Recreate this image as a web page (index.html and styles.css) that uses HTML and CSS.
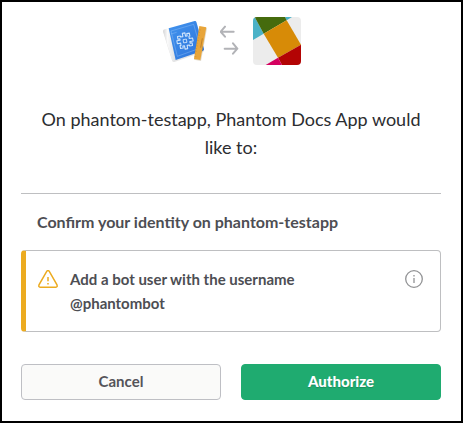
FILE: index.html
```html
<!DOCTYPE html>
<html lang="en">
<head>
<meta charset="utf-8">
<title>Authorize Phantom Docs App</title>
<link rel="stylesheet" href="styles.css">
</head>
<body>
<main class="dialog">
  <header class="apps">
    <svg class="app-icon" viewBox="18 27 144 144" aria-hidden="true">
      <defs>
        <linearGradient id="cover" x1="0" y1="0" x2="1" y2="1"><stop offset="0" stop-color="#4294ee"/><stop offset="1" stop-color="#2c72da"/></linearGradient>
        <linearGradient id="spine" x1="0" y1="0" x2="1" y2="0"><stop offset="0" stop-color="#d4d4d6"/><stop offset=".35" stop-color="#fafafa"/><stop offset="1" stop-color="#dcdee1"/></linearGradient>
      </defs>
      <path d="M24 68Q25 65 29 64L121 40Q125 39 126 43L147 124Q148 128 144 129L58 159Q54 160 52 157Z" fill="#777" opacity=".2" transform="translate(0 3)"/>
      <path d="M24 68Q25 65 29 64L42 61L63 156L57 158Q53 159 51 155Z" fill="url(#spine)"/>
      <path d="M41 61L119 39Q123 38 124 42L147 123Q148 127 144 128L62 156Z" fill="url(#cover)"/>
      <path d="M48 69L116 49L136 120L67 145Z M48 78L65 73" fill="none" stroke="#a9cff8" stroke-width="1.5" opacity=".7"/>
      <g transform="translate(90 99) rotate(-10)" fill="none" stroke="#cfe4fb" stroke-width="3.2" stroke-linejoin="round">
        <path d="M-4-14V-24H4V-14H9V-21H17V-12H14V-5H24V4H14V9H20V17H11V14H4V24H-4V14H-9V20H-17V11H-14V4H-24V-5H-14V-9H-20V-17H-11V-14Z"/>
        <rect x="-5" y="-5" width="10" height="10" stroke-width="2.5"/>
      </g>
      <path d="M134 56L155 59L137 157L116 153Z" fill="#8b6b2d" opacity=".25" transform="translate(1 2)"/>
      <path d="M133 54L154 58L136 156L117 153Z" fill="#e8a53a"/>
      <path d="M132 65l6 1M131 73l4 1M129 81l6 1M128 89l4 1M126 97l6 1M125 105l4 1M123 113l6 1M122 121l4 1M120 129l6 1M119 137l4 1M118 145l6 1" stroke="#c58429" stroke-width="1.2"/>
      <path d="M142 91L137 119" stroke="#b57a28" stroke-width="2.5"/>
    </svg>
    <svg class="arrows" viewBox="30 52 57 90" aria-hidden="true">
      <path d="M71 72H33M45 57L32 72L45 87M44 123H81M69 107L82 123L69 138"/>
    </svg>
    <svg class="app-icon workspace" viewBox="0 0 144 144" aria-hidden="true">
      <path d="M0 0H144V144H0Z" fill="#ececec"/>
      <path d="M0 0H5L32 50L0 69Z" fill="#4bb2c7"/>
      <path d="M96 0H117L101 10Z" fill="#4bb2c7"/>
      <path d="M5 0H96L101 10L32 50Z" fill="#456b0d"/>
      <path d="M32 50L101 10L144 83L75 122Z" fill="#d78b07"/>
      <path d="M75 122L144 83V144H87Z" fill="#b30404"/>
      <path d="M38 144L75 122L87 144Z" fill="#d4005f"/>
    </svg>
  </header>
  <h1 class="title">On phantom-testapp, Phantom Docs App would<br>like to:</h1>
  <section class="permissions">
    <h2 class="subtitle">Confirm your identity on phantom-testapp</h2>
    <div class="scope">
      <svg class="warning" viewBox="0 0 20 18" aria-hidden="true">
        <path d="M8.7 1.4Q10-.2 11.3 1.4L19 14.9Q19.7 17.2 17.5 17.3H2.5Q.3 17.2 1 14.9Z"/>
        <path d="M10 7V11.2M10 13V14.4"/>
      </svg>
      <p class="scope-text">Add a bot user with the username<br>@phantombot</p>
      <svg class="info" viewBox="0 0 18 18" aria-hidden="true">
        <circle cx="9" cy="9" r="8.3"/>
        <path d="M9 8V13M9 5V6.4"/>
      </svg>
    </div>
  </section>
  <footer class="actions">
    <button class="button cancel">Cancel</button>
    <button class="button authorize">Authorize</button>
  </footer>
</main>
</body>
</html>
```

FILE: styles.css
```css
* { box-sizing: border-box; }
body { margin: 0; background: #fff; font-family: Lato, "Liberation Sans", sans-serif; }
.dialog { width: 463px; height: 423px; border: 2px solid #000; padding: 15px 20px 0 19px; overflow: hidden; }
.apps { display: flex; justify-content: center; height: 48px; }
.app-icon { width: 48px; height: 48px; overflow: visible; }
.workspace { border-radius: 4px; overflow: hidden; }
.arrows { width: 19px; height: 30px; margin: 8px 14px 0 11px; fill: none; stroke: #b2b3b7; stroke-width: 6; stroke-linecap: round; stroke-linejoin: round; }
.title { margin: 40px 0 0; font-size: 18px; line-height: 28px; font-weight: 400; text-align: center; color: #2c2d30; white-space: nowrap; }
.permissions { margin-top: 32px; border-top: 1px solid #bebfc1; }
.subtitle { margin: 16px 0 16px 16px; font-size: 16px; line-height: 24px; font-weight: 700; color: #4d4e53; white-space: nowrap; }
.scope { display: flex; align-items: flex-start; height: 82px; border: 1px solid #bebfc1; border-left: 5px solid #ecab20; border-radius: 4px; padding: 16px 17px 0 12px; }
.warning { flex: none; width: 20px; height: 18px; margin: 3px 12px 0 0; fill: none; stroke: #ecab20; stroke-width: 1.5; }
.scope-text { flex: 1; margin: 0; font-size: 15px; line-height: 24px; font-weight: 700; color: #4d4e53; white-space: nowrap; }
.info { flex: none; width: 18px; height: 18px; margin-top: 3px; fill: none; stroke: #919294; stroke-width: 1.3; }
.actions { display: flex; gap: 20px; margin-top: 32px; }
.button { flex: 1; height: 36px; padding: 0 0 2px; border: 1px solid #bebfc4; border-radius: 4px; font: 700 15px/20px Lato, "Liberation Sans", sans-serif; }
.cancel { background: #fafaf9; color: #555459; }
.authorize { background: #1fab70; border-color: #1fab70; color: #fff; font-weight: 900; text-shadow: 0 1px 1px rgba(0, 0, 0, .18); }
```
